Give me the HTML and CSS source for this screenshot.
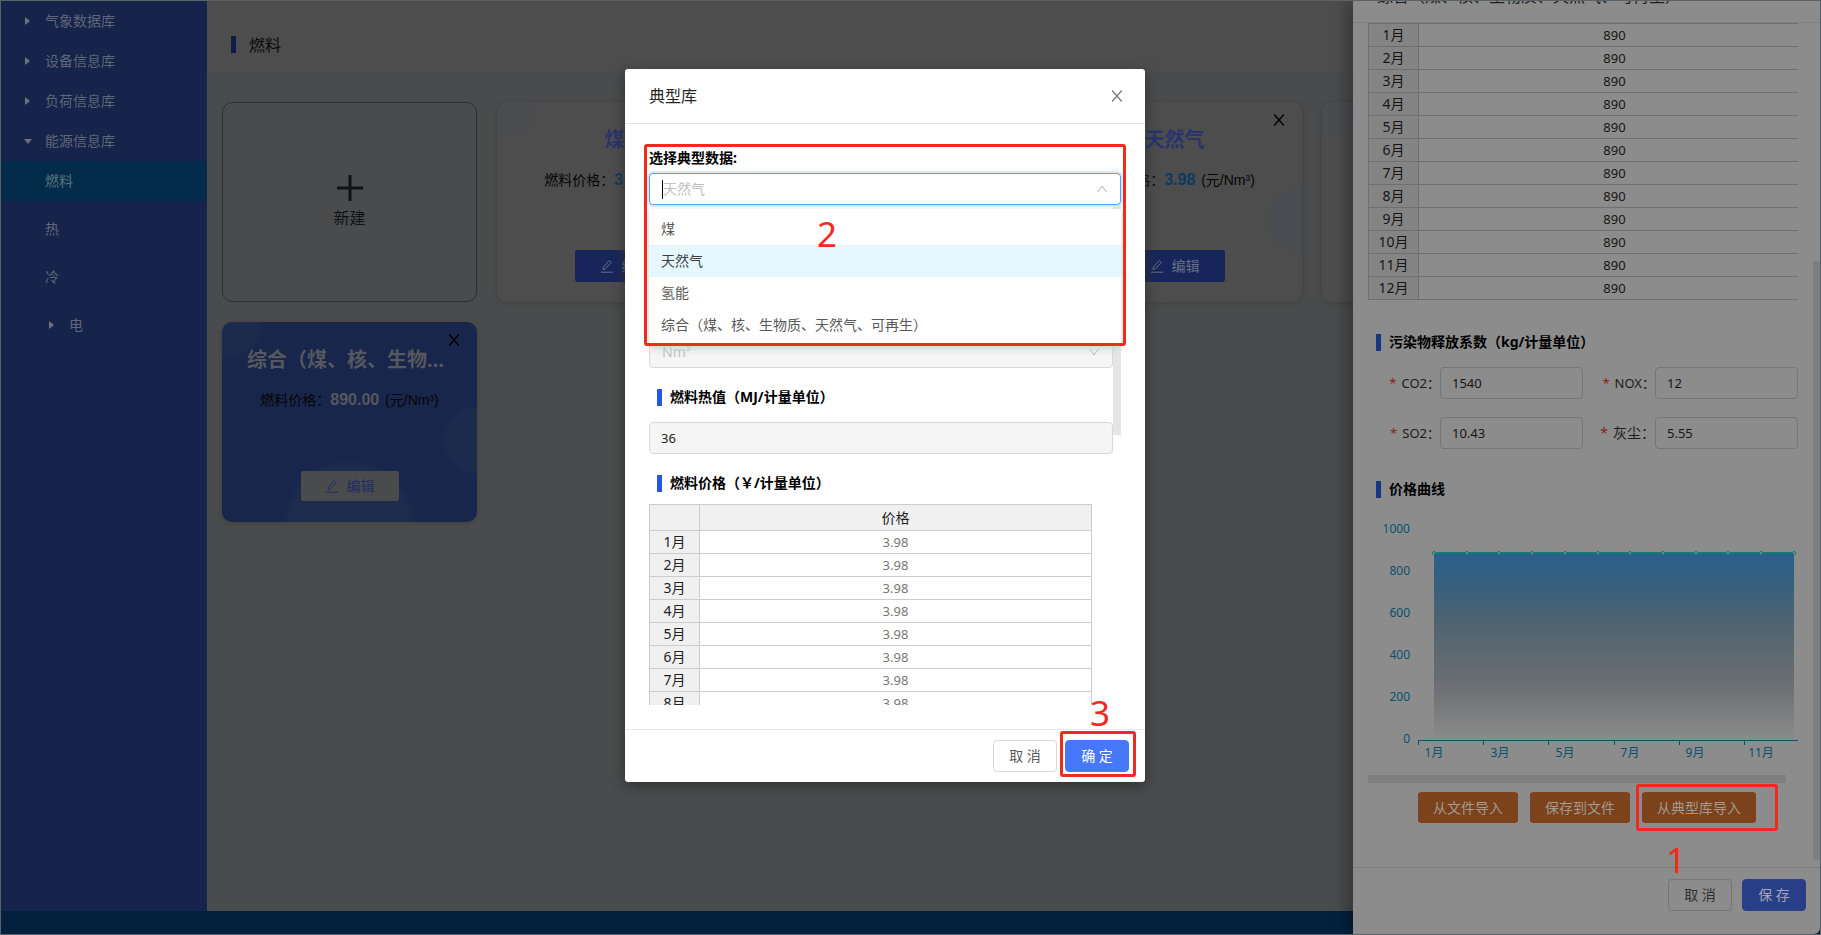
FILE: index.html
```html
<!DOCTYPE html>
<html lang="zh-CN">
<head>
<meta charset="utf-8">
<title>燃料</title>
<link rel="stylesheet" href="styles.css">
</head>
<body>
<svg class="defs" aria-hidden="true">
  <symbol id="i-close" viewBox="0 0 12 12"><path d="M1.2 .5 10.8 11.5M10.8 .5 1.2 11.5" fill="none" stroke="currentColor" stroke-width="1.3"/></symbol>
  <symbol id="i-edit" viewBox="0 0 14 14"><path d="M3.4 8.1 9.3 1.5l2 1.9-6 6.5-2.4.7zM.8 13.2h12.4" fill="none" stroke="currentColor" stroke-width="1"/></symbol>
  <symbol id="i-down" viewBox="0 0 12 12"><path d="M1.5 2.8 6 9l4.5-6.2" fill="none" stroke="currentColor" stroke-width="1"/></symbol>
</svg>
<div class="app">
  <div class="shell">
    <nav class="sidebar">
      <ul class="menu">
        <li class="item"><span class="tri"></span>气象数据库</li>
        <li class="item"><span class="tri"></span>设备信息库</li>
        <li class="item"><span class="tri"></span>负荷信息库</li>
        <li class="item"><span class="tri open"></span>能源信息库</li>
        <li class="item active"><span class="tri none"></span>燃料</li>
        <li class="item spaced"><span class="tri none"></span>热</li>
        <li class="item spaced"><span class="tri none"></span>冷</li>
        <li class="item spaced nested"><span class="tri"></span>电</li>
      </ul>
    </nav>
    <main class="main">
      <header class="page-head"><h1 class="page-title">燃料</h1></header>
      <div class="cards">
        <button class="card add">
          <svg class="plus" viewBox="0 0 26 26"><path d="M13 0v26M0 13h26" stroke="currentColor" stroke-width="3"/></svg>
          <span>新建</span>
        </button>
        <article class="card">
          <h2 class="name">煤炭</h2>
          <p class="price">燃料价格：<b>3.98</b> (元/Nm³)</p>
          <button class="edit"><svg class="ic14"><use href="#i-edit"/></svg>编辑</button>
        </article>
        <article class="card"></article>
        <article class="card">
          <button class="card-x" aria-label="删除"><svg class="ic12"><use href="#i-close"/></svg></button>
          <h2 class="name">天然气</h2>
          <p class="price">燃料价格：<b>3.98</b> (元/Nm³)</p>
          <button class="edit"><svg class="ic14"><use href="#i-edit"/></svg>编辑</button>
        </article>
        <article class="card"></article>
        <article class="card blue">
          <button class="card-x" aria-label="删除"><svg class="ic12"><use href="#i-close"/></svg></button>
          <h2 class="name">综合（煤、核、生物质、天然气、可再生）</h2>
          <p class="price">燃料价格：<b>890.00</b> (元/Nm³)</p>
          <button class="edit"><svg class="ic14"><use href="#i-edit"/></svg>编辑</button>
        </article>
      </div>
    </main>
  </div>
  <footer class="foot"></footer>

  <aside class="drawer">
    <header class="drawer-head"><h2 class="drawer-title">综合（煤、核、生物质、天然气、可再生）</h2></header>
    <div class="drawer-body">
      <div class="sheet-wrap">
        <table class="sheet">
          <tr><th>1月</th><td>890</td></tr>
          <tr><th>2月</th><td>890</td></tr>
          <tr><th>3月</th><td>890</td></tr>
          <tr><th>4月</th><td>890</td></tr>
          <tr><th>5月</th><td>890</td></tr>
          <tr><th>6月</th><td>890</td></tr>
          <tr><th>7月</th><td>890</td></tr>
          <tr><th>8月</th><td>890</td></tr>
          <tr><th>9月</th><td>890</td></tr>
          <tr><th>10月</th><td>890</td></tr>
          <tr><th>11月</th><td>890</td></tr>
          <tr><th>12月</th><td>890</td></tr>
        </table>
      </div>
      <h3 class="section">污染物释放系数（kg/计量单位）</h3>
      <form class="factors">
        <label for="co2">CO2：</label><input id="co2" value="1540">
        <label for="nox">NOX：</label><input id="nox" value="12">
        <label for="so2">SO2：</label><input id="so2" value="10.43">
        <label for="dust" class="zh">灰尘：</label><input id="dust" value="5.55">
      </form>
      <h3 class="section">价格曲线</h3>
      <svg class="chart" viewBox="0 0 430 250">
        <defs>
          <linearGradient id="area" x1="0" y1="0" x2="0" y2="1">
            <stop offset="0" stop-color="#2a5f8c"/>
            <stop offset=".15" stop-color="#35607f"/>
            <stop offset=".4" stop-color="#526470"/>
            <stop offset=".7" stop-color="#6b6e72"/>
            <stop offset="1" stop-color="#8b8b8b"/>
          </linearGradient>
        </defs>
        <g class="axis-text" text-anchor="end">
          <text x="42" y="23">1000</text><text x="42" y="65">800</text><text x="42" y="107">600</text>
          <text x="42" y="149">400</text><text x="42" y="191">200</text><text x="42" y="233">0</text>
        </g>
        <rect x="66" y="43" width="360" height="187" fill="url(#area)"/>
        <path d="M66 43h360" stroke="#127a78" stroke-width="2"/>
        <g fill="#8c8c8c" stroke="#127a78">
          <circle cx="66" cy="43" r="1.5"/><circle cx="99" cy="43" r="1.5"/><circle cx="131" cy="43" r="1.5"/><circle cx="164" cy="43" r="1.5"/><circle cx="197" cy="43" r="1.5"/><circle cx="230" cy="43" r="1.5"/><circle cx="262" cy="43" r="1.5"/><circle cx="295" cy="43" r="1.5"/><circle cx="328" cy="43" r="1.5"/><circle cx="360" cy="43" r="1.5"/><circle cx="393" cy="43" r="1.5"/><circle cx="426" cy="43" r="1.5"/>
        </g>
        <path d="M50 230.500H430M50.500 230v5M115.500 230v5M180.500 230v5M246.500 230v5M311.500 230v5M376.500 230v5" fill="none" stroke="#08506e"/>
        <g class="axis-text" text-anchor="middle">
          <text x="66" y="247">1月</text><text x="132" y="247">3月</text><text x="197" y="247">5月</text>
          <text x="262" y="247">7月</text><text x="327" y="247">9月</text><text x="393" y="247">11月</text>
        </g>
      </svg>
      <div class="hbar"></div>
      <div class="imports">
        <button class="orange">从文件导入</button>
        <button class="orange">保存到文件</button>
        <span class="marked m1"><button class="orange">从典型库导入</button><span class="step">1</span></span>
      </div>
    </div>
    <div class="vbar"></div>
    <footer class="drawer-foot">
      <button class="btn">取 消</button>
      <button class="btn primary">保 存</button>
    </footer>
  </aside>

  <section class="modal" role="dialog" aria-labelledby="mt">
    <header class="modal-head">
      <h2 id="mt" class="modal-title">典型库</h2>
      <button class="modal-x" aria-label="关闭"><svg class="ic12"><use href="#i-close"/></svg></button>
    </header>
    <div class="modal-body">
      <div class="picker">
        <label class="picker-label" for="lib">选择典型数据:</label>
        <div class="combo">
          <span class="caret"></span>
          <input id="lib" role="combobox" aria-expanded="true" placeholder="天然气">
          <svg class="ic12 flip"><use href="#i-down"/></svg>
        </div>
        <ul class="options" role="listbox">
          <li role="option">煤</li>
          <li role="option" class="on" aria-selected="true">天然气</li>
          <li role="option">氢能</li>
          <li role="option">综合（煤、核、生物质、天然气、可再生）</li>
        </ul>
        <span class="step">2</span>
      </div>
      <div class="scroller">
        <div class="unit">
          <select disabled aria-label="计量单位"><option>Nm³</option></select>
          <svg class="ic12"><use href="#i-down"/></svg>
        </div>
        <h3 class="section">燃料热值（MJ/计量单位）</h3>
        <input class="heat" value="36" readonly aria-label="燃料热值">
        <h3 class="section">燃料价格（￥/计量单位）</h3>
        <table class="sheet">
          <tr class="top"><th></th><th>价格</th></tr>
          <tr><th>1月</th><td>3.98</td></tr>
          <tr><th>2月</th><td>3.98</td></tr>
          <tr><th>3月</th><td>3.98</td></tr>
          <tr><th>4月</th><td>3.98</td></tr>
          <tr><th>5月</th><td>3.98</td></tr>
          <tr><th>6月</th><td>3.98</td></tr>
          <tr><th>7月</th><td>3.98</td></tr>
          <tr><th>8月</th><td>3.98</td></tr>
        </table>
        <div class="thumb"></div>
      </div>
    </div>
    <footer class="modal-foot">
      <button class="btn">取 消</button>
      <span class="marked m3"><button class="btn primary">确 定</button><span class="step">3</span></span>
    </footer>
  </section>
</div>
</body>
</html>
```
FILE: styles.css
```css
* { box-sizing: border-box; }
body {
  margin: 0;
  font: 14px/22px "Noto Sans", "Noto Sans CJK SC", sans-serif;
  color: #000;
}
h1, h2, h3, p, ul { margin: 0; padding: 0; font-weight: 400; }
ul { list-style: none; }
button, input, select { font: inherit; color: inherit; }
button { border: 0; padding: 0; background: none; }
.defs { position: absolute; width: 0; height: 0; }
.ic12 { width: 12px; height: 12px; display: block; }
.ic14 { width: 14px; height: 14px; display: block; }

.app {
  position: relative;
  display: flex;
  flex-direction: column;
  height: 100vh;
  overflow: hidden;
  border: 1px solid #596268;
  background: #4a4b4c;
}
.shell { flex: 1; display: flex; min-height: 0; }
.foot { height: 23px; background: #03203f; }

/* sidebar */
.sidebar { width: 206px; background: #16234b; color: #5f6678; }
.item { display: flex; align-items: center; height: 40px; padding-left: 24px; }
.item.active { background: #052b4a; color: #54757d; }
.item.spaced { margin-top: 8px; }
.item.nested { padding-left: 48px; }
.tri { width: 20px; display: flex; }
.tri::before {
  content: "";
  border: 4px solid transparent;
  border-left: 5px solid #6c7080;
  border-right: 0;
}
.tri.open::before { margin-left: -1px; border: 4px solid transparent; border-top: 5px solid #6c7080; border-bottom: 0; }
.tri.none::before { display: none; }

/* page */
.main { flex: 1; min-width: 0; }
.page-head { display: flex; align-items: center; height: 71px; padding: 0 24px; background: #4d4d4d; }
.page-title { display: flex; align-items: center; gap: 13px; padding-top: 16px; font-size: 16px; color: #090a0b; }
.page-title::before { content: ""; width: 5px; height: 17px; background: #0d1d46; }
.cards {
  display: grid;
  grid-template-columns: repeat(5, 255px);
  grid-auto-rows: 200px;
  gap: 20px;
  padding: 30px 15px;
}
.card {
  position: relative;
  display: flex;
  flex-direction: column;
  align-items: center;
  padding: 22px 20px 20px;
  border-radius: 10px;
  background:
    radial-gradient(circle at 100% 118px, #494c50 30px, transparent 37px),
    radial-gradient(circle at 6px 0, #4a4c50 30px, transparent 38px),
    #4d4d4d;
  box-shadow: 0 1px 5px #3f4041;
}
.card.add {
  justify-content: center;
  gap: 6px;
  padding: 0;
  border: 1px solid #2e3032;
  background: #4a4b4c;
  box-shadow: none;
  font-size: 16px;
  color: #101315;
}
.plus { width: 26px; height: 26px; }
.name {
  max-width: 205px;
  overflow: hidden;
  white-space: nowrap;
  text-overflow: ellipsis;
  font-size: 20px;
  line-height: 32px;
  font-weight: 700;
  color: #29336f;
}
.price { margin-top: 13px; font-family: "Liberation Sans", "Noto Sans CJK SC", sans-serif; white-space: nowrap; color: #050505; }
.price b { margin-right: 2px; font-size: 16px; color: #0b3a63; }
.edit {
  display: flex;
  align-items: center;
  justify-content: center;
  gap: 8px;
  width: 100px;
  height: 32px;
  margin-top: auto;
  border: 1px solid transparent;
  border-radius: 3px;
  background: #17255a;
  color: #687085;
}
.card-x { position: absolute; top: 12px; right: 17px; color: #000; }
.card.blue {
  background:
    radial-gradient(circle at 100% 118px, #1c2a4d 30px, transparent 36px),
    radial-gradient(circle at 50% 204px, #1d2b4d 60px, transparent 67px),
    radial-gradient(circle at 6px 0, #1c2a4d 32px, transparent 38px),
    #19264b;
}
.blue .name, .blue .price b { color: #55585e; }
.blue .edit { background: #4a4b4c; background-clip: padding-box; color: #202d62; }

/* shared form parts */
.section { display: flex; align-items: center; gap: 8px; padding-left: 8px; font-size: 14px; font-weight: 700; }
.section::before { content: ""; width: 5px; height: 17px; background: #2458e0; }
.sheet { border-collapse: collapse; table-layout: fixed; width: 443px; font-size: 13px; line-height: 22px; text-align: center; }
.sheet th, .sheet td { height: 23px; padding: 0; border: 1px solid #ccc; font-weight: 400; }
.sheet th { width: 50px; background: #f0f0f0; color: #222; font-size: 14px; }
.sheet td { color: #777; }
.sheet .top th { height: 26px; }
.sheet .top th + th { width: auto; }
.btn { width: 64px; height: 32px; border: 1px solid #d9d9d9; border-radius: 4px; background: #fff; color: #595959; }
.btn.primary { border-color: #4878fa; background: #4878fa; color: #fff; }
.step { position: absolute; font-size: 35px; line-height: 36px; color: #f02a1d; }
.marked { position: relative; display: flex; }
.marked::before, .picker::after {
  content: "";
  position: absolute;
  z-index: 3;
  border: 3px solid #f02a1d;
  border-radius: 3px;
  pointer-events: none;
}

/* drawer */
.drawer {
  position: absolute;
  inset: 0 0 0 auto;
  display: flex;
  flex-direction: column;
  width: 467px;
  border-radius: 0 0 6px 0;
  background: #8c8c8c;
  box-shadow: -6px 0 16px rgba(0, 0, 0, .3);
}
.drawer-head { display: flex; align-items: flex-end; height: 22px; padding: 0 24px 15px; overflow: hidden; border-bottom: 1px solid #808080; }
.drawer-title { font-size: 16px; line-height: 22px; color: #202020; }
.drawer-body { flex: 1; min-height: 0; padding: 0 22px 0 15px; }
.sheet-wrap { overflow: hidden; }
.drawer .sheet th, .drawer .sheet td { border-color: #6f6f6f; color: #161616; }
.drawer .sheet th { background: #848484; }
.drawer .section { margin-top: 31px; }
.drawer .factors + .section { margin-top: 29px; }
.drawer .section::before { background: #163682; }
.factors { display: grid; grid-template-columns: 72px 1fr 72px 1fr; row-gap: 18px; margin-top: 14px; font-size: 13px; }
.factors label { display: flex; align-items: center; justify-content: flex-end; white-space: nowrap; color: #1c1c1c; }
.factors label::before { content: "*"; margin-right: 5px; color: #8a1f24; }
.factors .zh { font-size: 14px; }
.factors input { min-width: 0; width: 100%; height: 32px; padding: 0 11px; border: 1px solid #767676; border-radius: 4px; background: none; color: #161616; }
.chart { display: block; width: 100%; margin-top: 10px; }
.axis-text { font-size: 12px; fill: #08506e; }
.hbar { height: 8px; margin: 15px 12px 9px 0; background: #7f7f7f; }
.imports { display: flex; gap: 12px; padding-left: 50px; }
.orange { height: 31px; padding: 0 14px; border: 1px solid #7c421b; border-radius: 3px; background: #7c421b; color: #a39a90; white-space: nowrap; }
.m1::before { inset: -8px -22px -8px -6px; }
.m1 .step { left: 24px; top: 50px; }
.vbar { position: absolute; right: 0; top: 260px; width: 7px; height: 599px; background: #7f7f7f; }
.drawer-foot { display: flex; justify-content: flex-end; gap: 10px; height: 67px; padding: 11px 14px; border-top: 1px solid #7e7e7e; }
.drawer .btn { border-color: #767676; background: none; color: #303030; }
.drawer .primary { border-color: #283f87; background: #283f87; color: #a0a6b8; }

/* modal */
.modal {
  position: absolute;
  left: 624px;
  top: 68px;
  width: 520px;
  border-radius: 3px;
  background: #fff;
  box-shadow: 0 4px 14px #303132;
}
.modal-head { display: flex; align-items: center; justify-content: space-between; height: 55px; padding: 0 22px 0 24px; border-bottom: 1px solid #e4e4e4; }
.modal-title { font-size: 16px; color: #262626; }
.modal-x { color: #7b7b7b; }
.modal-body { padding: 24px; }
.picker { position: relative; }
.picker::after { inset: -4px -5px -141px; }
.picker-label { display: block; padding-bottom: 6px; line-height: 19px; font-weight: 700; }
.combo { display: flex; align-items: center; height: 32px; padding: 0 12px; border: 1px solid #4ea2f2; border-radius: 4px; box-shadow: 0 0 0 2px #d6eafb; }
.combo input { flex: 1; min-width: 0; border: 0; padding: 0; outline: 0; background: none; }
.combo input::placeholder { color: #bfbfbf; opacity: 1; }
.caret { width: 1px; height: 19px; background: #000; }
.combo svg, .unit svg { color: #b5b5b5; }
.flip { transform: rotate(180deg); }
.options { position: absolute; z-index: 2; top: 100%; left: 0; right: 0; margin-top: 4px; padding: 4px 0; background: #fff; box-shadow: 0 3px 8px #ccc; }
.options li { height: 32px; padding: 5px 12px; color: #595959; }
.options .on { background: #e5f7ff; color: #404040; }
.picker .step { z-index: 3; left: 168px; top: 68px; }
.scroller { position: relative; height: 500px; padding: 131px 8px 0 0; overflow: hidden; }
.thumb { position: absolute; right: 0; top: 0; width: 8px; height: 230px; background: #e5e5e5; }
.unit { display: flex; align-items: center; height: 32px; padding: 0 12px; border: 1px solid #d9d9d9; border-radius: 4px; background: #f5f5f5; }
.unit select { flex: 1; appearance: none; border: 0; padding: 0; background: none; color: #bfbfbf; opacity: 1; }
.scroller .section { margin: 18px 0 14px; }
.scroller .section + .sheet { margin-top: -4px; }
.heat { display: block; width: 100%; height: 32px; padding: 0 11px; border: 1px solid #d9d9d9; border-radius: 4px; background: #f5f5f5; font-size: 13px; color: #222; }
.modal-foot { display: flex; justify-content: flex-end; gap: 8px; padding: 10px 16px; border-top: 1px solid #e8e8e8; }
.m3::before { inset: -9px -7px -5px -5px; }
.m3 .step { left: 25px; top: -45px; }
```
